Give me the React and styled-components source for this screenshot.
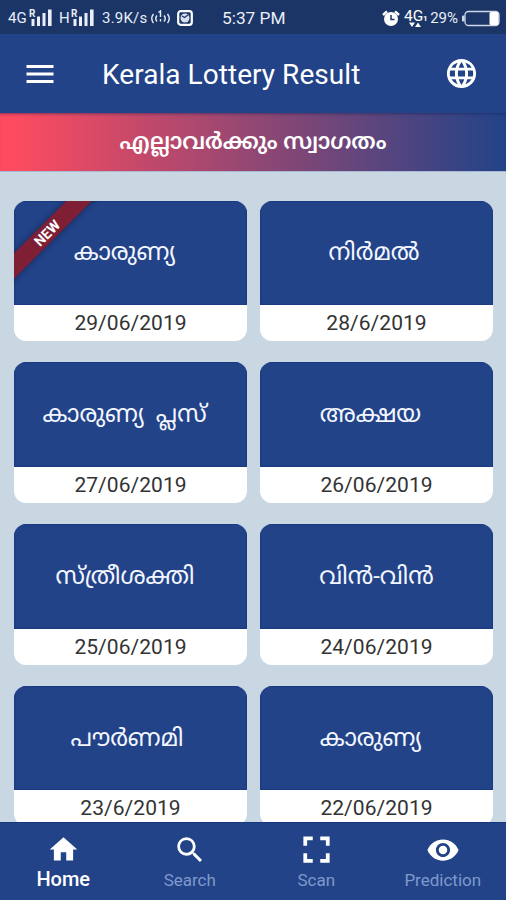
import styled, { createGlobalStyle } from "styled-components"
import {
  MdFullscreen,
  MdHome,
  MdLanguage,
  MdMenu,
  MdSearch,
  MdVisibility,
} from "react-icons/md"

const COLORS = {
  MAIN: '#224388',
  STATUS: '#1b3566',
  BACKGROUND: '#c9d7e2',
  RIBBON: '#7f1f35',
  INACTIVE: '#7f99cb',
}

const GlobalStyle = createGlobalStyle`
  * {
    box-sizing: border-box;
  }
  body {
    margin: 0;
    font-family: Roboto, "Noto Sans Malayalam", "Noto Sans", sans-serif;
  }
`

const Screen = styled.div`
  display: flex;
  flex-direction: column;
  width: 506px;
  height: 900px;
  overflow: hidden;
  background: ${COLORS.BACKGROUND};
`

const StatusBar = styled.div`
  display: flex;
  flex: none;
  align-items: center;
  height: 34px;
  padding: 2px 6px 0 8px;
  background: ${COLORS.STATUS};
  color: #e9eef8;
  font-size: 15px;
  white-space: nowrap;
`

const StatusText = styled.span`
  font-size: ${({ $size }) => $size || 15}px;
  width: ${({ $width }) => $width}px;
  margin-left: ${({ $left }) => $left || 0}px;
  letter-spacing: ${({ $spacing }) => $spacing || 0}px;
`

const StatusSvg = styled.svg`
  flex: none;
  display: block;
  margin-left: ${({ $left }) => $left || 0}px;
`

const Header = styled.header`
  display: flex;
  flex: none;
  align-items: center;
  height: 79px;
  padding: 0 27px 0 22px;
  background: ${COLORS.MAIN};
  color: #fff;
`

const HeaderTitle = styled.h1`
  flex: 1;
  margin: 0 0 0 44px;
  padding-top: 2px;
  font-size: 28px;
  font-weight: 400;
  letter-spacing: 0.05px;
`

const Banner = styled.div`
  display: flex;
  flex: none;
  align-items: center;
  justify-content: center;
  height: 59px;
  padding-top: 2px;
  border-bottom: 1px solid #a9b8d3;
  background: linear-gradient(90deg, #ff4b5f 0%, #ff4b5f 2%, #224388 100%);
  box-shadow: inset 0 3px 3px -2px rgba(20, 30, 80, 0.5);
  color: #fff;
  font-size: 22.4px;
  font-weight: 600;
  white-space: nowrap;
`

const LotteryList = styled.main`
  display: grid;
  flex: 1;
  grid-template-columns: 233px 233px;
  grid-auto-rows: 140.5px;
  gap: 21.3px 13px;
  min-height: 0;
  padding: 28.5px 14px 0;
  overflow: hidden;
`

const Card = styled.article`
  position: relative;
  display: flex;
  flex-direction: column;
  border-radius: 12px;
  overflow: hidden;
  background: #fff;
`

const CardTitle = styled.div`
  display: flex;
  align-items: center;
  justify-content: center;
  height: 104.5px;
  padding-top: 2px;
  padding-right: ${({ $shift }) => $shift || 0}px;
  background: ${COLORS.MAIN};
  box-shadow: inset 0 0 1px 1px #1b3b80;
  color: #f3f6ff;
  font-size: 24px;
  white-space: pre;
`

const CardDate = styled.div`
  display: flex;
  flex: 1;
  align-items: center;
  justify-content: center;
  color: #333;
  font-size: 21px;
  letter-spacing: 0.05px;
`

const Ribbon = styled.div`
  position: absolute;
  top: 23px;
  left: -37px;
  width: 140px;
  height: 18px;
  background: ${COLORS.RIBBON};
  box-shadow: 0 0 6px rgba(0, 0, 0, 0.4);
  color: #fff;
  font-size: 14px;
  font-weight: 700;
  line-height: 18px;
  text-align: center;
  transform: rotate(-45deg);
`

const BottomNav = styled.nav`
  display: grid;
  flex: none;
  grid-template-columns: repeat(4, 1fr);
  height: 78px;
  border-top: 1px solid #17377c;
  background: ${COLORS.MAIN};
`

const NavItem = styled.div`
  display: flex;
  flex-direction: column;
  align-items: center;
  padding-top: 9px;
  color: ${({ $active }) => ($active ? '#fff' : COLORS.INACTIVE)};
  font-size: ${({ $active }) => ($active ? 20 : 17)}px;
  font-weight: ${({ $active }) => ($active ? 500 : 400)};
  line-height: ${({ $active }) => ($active ? 24 : 26)}px;
`

const NavIcon = styled.div`
  display: flex;
  align-items: center;
  justify-content: center;
  height: 35px;
  color: #fff;
`

const LOTTERIES = [
  { name: 'കാരുണ്യ', date: '29/06/2019', shift: 12, isNew: true },
  { name: 'നിർമൽ', date: '28/6/2019', shift: 5 },
  { name: 'കാരുണ്യ  പ്ലസ്', date: '27/06/2019', shift: 12 },
  { name: 'അക്ഷയ', date: '26/06/2019', shift: 12 },
  { name: 'സ്ത്രീശക്തി', date: '25/06/2019', shift: 11 },
  { name: 'വിൻ-വിൻ', date: '24/06/2019', shift: 0 },
  { name: 'പൗർണമി', date: '23/6/2019', shift: 7 },
  { name: 'കാരുണ്യ', date: '22/06/2019', shift: 12 },
]

const NAV_ITEMS = [
  { label: 'Home', Icon: MdHome, size: 33, active: true },
  { label: 'Search', Icon: MdSearch, size: 34 },
  { label: 'Scan', Icon: MdFullscreen, size: 45 },
  { label: 'Prediction', Icon: MdVisibility, size: 34 },
]

const RoamingSignal = ({ left }) => (
  <StatusSvg $left={left} width="24" height="20" viewBox="0 0 24 20" fill="#e9eef8">
    <text x="0" y="8.500" fontSize="10" fontWeight="700">R</text>
    <rect x="2.500" y="11" width="3" height="7" />
    <rect x="8" y="8.500" width="3" height="9.500" />
    <rect x="13.500" y="5" width="3" height="13" />
    <rect x="19" y="1.500" width="3.600" height="16.500" />
  </StatusSvg>
)

const HotspotIcon = () => (
  <StatusSvg $left={2} width="21" height="16" viewBox="0 0 21 16" fill="none" stroke="#e9eef8" strokeWidth="1.400">
    <path d="M3.500 4Q0 8.500 3.500 13M7 5.500Q4.500 8.500 7 11.500M17.500 4Q21 8.500 17.500 13M14 5.500Q16.500 8.500 14 11.500" />
    <path d="M8.500 2.500L10.500 1V7M10.500 9V11.500" />
  </StatusSvg>
)

const GalleryIcon = () => (
  <StatusSvg $left={6} width="16" height="16" viewBox="0 0 16 16">
    <rect x="1.200" y="1.200" width="13.600" height="13.600" rx="2.500" fill="none" stroke="#fff" strokeWidth="2.200" />
    <circle cx="8" cy="8" r="4.500" fill="#d8deec" />
    <path d="M5 6L7.500 7.500L11 5" fill="none" stroke={COLORS.STATUS} strokeWidth="1.200" />
  </StatusSvg>
)

const AlarmIcon = () => (
  <StatusSvg width="18" height="17" viewBox="0 0 18 17" fill="#fff">
    <circle cx="9" cy="9" r="7" />
    <path d="M1 5L5 1.300M17 5L13 1.300" stroke="#fff" strokeWidth="2.400" />
    <path d="M9 5V9.500H12.500" fill="none" stroke={COLORS.STATUS} strokeWidth="1.500" />
  </StatusSvg>
)

const NetworkIcon = () => (
  <StatusSvg $left={4} width="26" height="28" viewBox="0 0 26 28" fill="#fff">
    <text x="0" y="17" fontSize="15.500">4G</text>
    <text x="19" y="17" fontSize="8" fontWeight="700">1</text>
    <path d="M5 18.500H11L8 23ZM11 23H17L14 18.500Z" />
  </StatusSvg>
)

const BatteryIcon = () => (
  <StatusSvg $left={4} width="38" height="17" viewBox="0 0 38 17">
    <rect x="3" y="1.500" width="34" height="14" rx="3.500" fill="none" stroke="#cfd7e8" strokeWidth="1.300" />
    <rect x="0" y="5.500" width="2.500" height="6" rx="1" fill="#cfd7e8" />
    <rect x="27.500" y="2" width="9" height="13" rx="1.500" fill="#fff" />
  </StatusSvg>
)

const StatusSpacer = styled.div`
  flex: 1;
`

export const App = () => {
  return (
    <>
      <GlobalStyle />
      <Screen>
        <StatusBar>
          <StatusText $width={20}>4G</StatusText>
          <RoamingSignal left={1} />
          <StatusText $width={12} $left={6}>H</StatusText>
          <RoamingSignal left={0} />
          <StatusText $width={46} $left={7} $spacing={0.2}>3.9K/s</StatusText>
          <HotspotIcon />
          <GalleryIcon />
          <StatusText $size={17.3} $left={29}>5:37 PM</StatusText>
          <StatusSpacer />
          <AlarmIcon />
          <NetworkIcon />
          <StatusText $size={15}>29%</StatusText>
          <BatteryIcon />
        </StatusBar>
        <Header>
          <MdMenu size={36} />
          <HeaderTitle>Kerala Lottery Result</HeaderTitle>
          <MdLanguage size={35} />
        </Header>
        <Banner>എല്ലാവർക്കും സ്വാഗതം</Banner>
        <LotteryList>
          {
            LOTTERIES.map(lottery =>
              <Card key={lottery.date}>
                <CardTitle $shift={lottery.shift}>{lottery.name}</CardTitle>
                <CardDate>{lottery.date}</CardDate>
                {lottery.isNew && <Ribbon>NEW</Ribbon>}
              </Card>
            )
          }
        </LotteryList>
        <BottomNav>
          {
            NAV_ITEMS.map(({ label, Icon, size, active }) =>
              <NavItem key={label} $active={active}>
                <NavIcon>
                  <Icon size={size} />
                </NavIcon>
                {label}
              </NavItem>
            )
          }
        </BottomNav>
      </Screen>
    </>
  )
}

export default App
